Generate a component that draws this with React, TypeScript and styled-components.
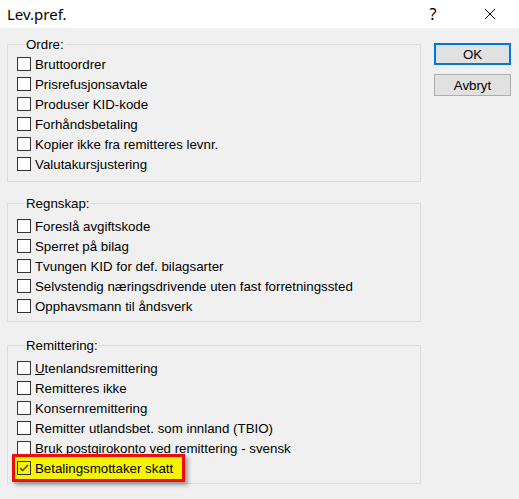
import styled, { createGlobalStyle } from 'styled-components';

const GlobalStyle = createGlobalStyle`
  html, body {
    margin: 0;
    padding: 0;
    background: #f0f0f0;
  }
  body {
    font-family: "Liberation Sans", Arial, sans-serif;
    font-size: 13.3px;
    color: #000;
  }
`;

const Window = styled.div`
  width: 519px;
  height: 499px;
  display: flex;
  flex-direction: column;
  background: #f0f0f0;
  overflow: hidden;
`;

const TitleBar = styled.div`
  height: 28px;
  background: #fff;
  display: flex;
  align-items: center;
  padding: 0 6px 0 7px;
  flex-shrink: 0;
`;

const Title = styled.span`
  flex: 1;
  font-family: "Noto Sans", "Open Sans", sans-serif;
  font-size: 15px;
  color: #000;
`;

const TitleButton = styled.div`
  width: 46px;
  height: 28px;
  display: flex;
  align-items: center;
  justify-content: center;
  font-family: "Noto Sans", sans-serif;
  font-size: 16px;
  color: #000;

  & + & {
    margin-left: 11px;
  }
`;

const Body = styled.div`
  display: flex;
  padding: 9px 0 0 7px;
`;

const Groups = styled.div`
  width: 414px;
  display: flex;
  flex-direction: column;
  gap: 14px;
`;

const Group = styled.fieldset<{ $top: number; $bottom: number; $gap: number }>`
  margin: ${(p) => p.$gap}px 0 0 0;
  border: 1px solid #dcdcdc;
  padding: ${(p) => p.$top}px 8px ${(p) => p.$bottom}px 9px;
  display: flex;
  flex-direction: column;
`;

const Legend = styled.legend`
  margin-left: 8px;
  padding: 0 1px;
  line-height: 15px;
`;

const Row = styled.label<{ $highlight?: boolean }>`
  display: flex;
  align-items: center;
  gap: 4px;
  height: 20px;
  white-space: nowrap;
  ${(p) =>
    p.$highlight &&
    `
    align-self: flex-start;
    box-sizing: border-box;
    height: 28px;
    margin: -4px 0 -4px -5px;
    padding: 0 9px 0 2px;
    border: 3px solid #ee0d0d;
    background: #f4f400;
    box-shadow: 3px 3px 4px rgba(0, 0, 0, 0.35);
  `}
`;

const Box = styled.span<{ $clear?: boolean }>`
  width: 14px;
  height: 14px;
  box-sizing: border-box;
  border: 1px solid #333;
  background: ${(p) => (p.$clear ? 'transparent' : '#fff')};
  display: flex;
  align-items: center;
  justify-content: center;
  flex-shrink: 0;
`;

const Access = styled.span`
  text-decoration: underline;
`;

const Buttons = styled.div`
  display: flex;
  flex-direction: column;
  gap: 9px;
  margin-left: 13px;
  padding-top: 6px;
`;

const Button = styled.button<{ $default?: boolean }>`
  width: 77px;
  height: 22px;
  box-sizing: border-box;
  padding: 0;
  font-family: "Liberation Sans", Arial, sans-serif;
  font-size: 13.3px;
  color: #000;
  background: #e1e1e1;
  border: ${(p) => (p.$default ? '2px solid #0078d7' : '1px solid #adadad')};
`;

type Item = { label: React.ReactNode; checked?: boolean; highlight?: boolean };

const ordre: Item[] = [
  { label: 'Bruttoordrer' },
  { label: 'Prisrefusjonsavtale' },
  { label: 'Produser KID-kode' },
  { label: 'Forhåndsbetaling' },
  { label: 'Kopier ikke fra remitteres levnr.' },
  { label: 'Valutakursjustering' },
];

const regnskap: Item[] = [
  { label: 'Foreslå avgiftskode' },
  { label: 'Sperret på bilag' },
  { label: 'Tvungen KID for def. bilagsarter' },
  { label: 'Selvstendig næringsdrivende uten fast forretningssted' },
  { label: 'Opphavsmann til åndsverk' },
];

const remittering: Item[] = [
  { label: <><Access>U</Access>tenlandsremittering</> },
  { label: 'Remitteres ikke' },
  { label: 'Konsernremittering' },
  { label: 'Remitter utlandsbet. som innland (TBIO)' },
  { label: 'Bruk postgirokonto ved remittering - svensk' },
  { label: 'Betalingsmottaker skatt', checked: true, highlight: true },
];

function Check({ item }: { item: Item }) {
  return (
    <Row $highlight={item.highlight}>
      <Box $clear={item.highlight}>
        {item.checked && (
          <svg width="12" height="12" viewBox="0 0 12 12">
            <polyline points="2,6 4.6,8.6 10,3" fill="none" stroke="#45450f" strokeWidth="1.4" />
          </svg>
        )}
      </Box>
      <span>{item.label}</span>
    </Row>
  );
}

type GroupProps = { title: string; items: Item[]; top: number; bottom: number; gap?: number };

function CheckGroup({ title, items, top, bottom, gap = 0 }: GroupProps) {
  return (
    <Group $top={top} $bottom={bottom} $gap={gap}>
      <Legend>{title}</Legend>
      {items.map((item, i) => (
        <Check key={i} item={item} />
      ))}
    </Group>
  );
}

export default function App() {
  return (
    <Window>
      <GlobalStyle />
      <TitleBar>
        <Title>Lev.pref.</Title>
        <TitleButton>?</TitleButton>
        <TitleButton>
          <svg width="12" height="12" viewBox="0 0 12 12">
            <path d="M1 1 L11 11 M11 1 L1 11" stroke="#000" strokeWidth="1" />
          </svg>
        </TitleButton>
      </TitleBar>
      <Body>
        <Groups>
          <CheckGroup title="Ordre:" items={ordre} top={2} bottom={7} />
          <CheckGroup title="Regnskap:" items={regnskap} top={5} bottom={5} />
          <CheckGroup title="Remittering:" items={remittering} top={5} bottom={5} gap={2} />
        </Groups>
        <Buttons>
          <Button $default>OK</Button>
          <Button>Avbryt</Button>
        </Buttons>
      </Body>
    </Window>
  );
}
